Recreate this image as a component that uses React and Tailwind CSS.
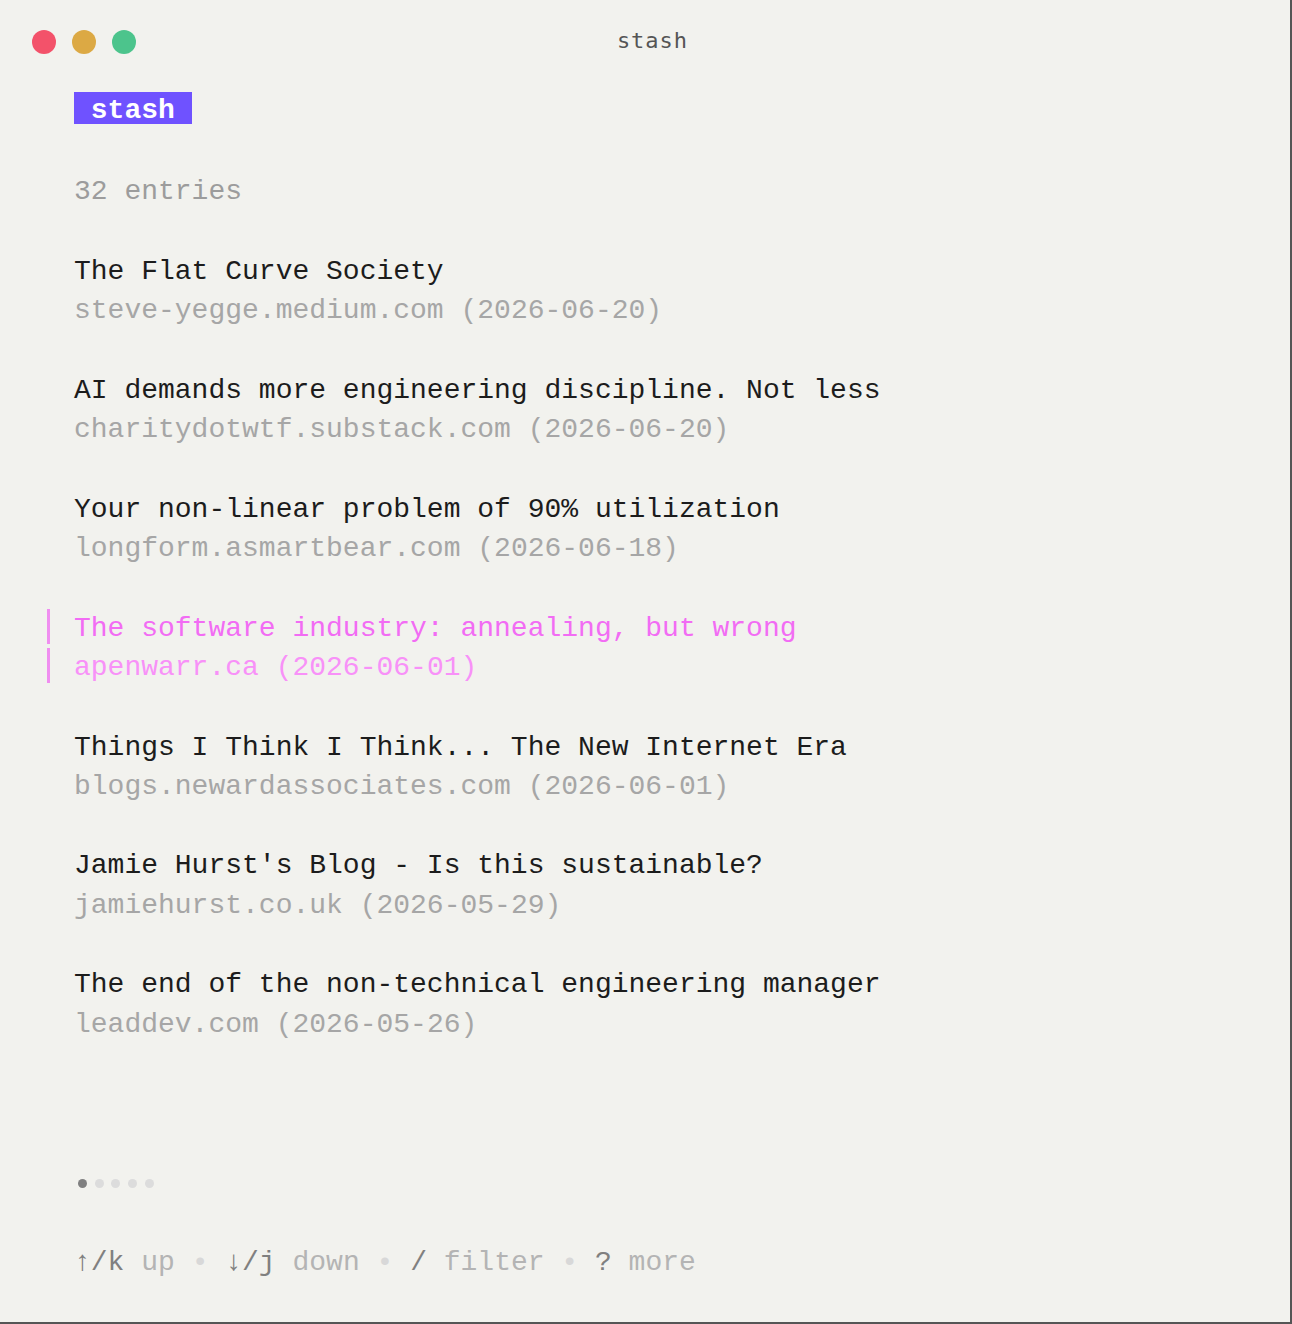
import React from "react";

const ENTRIES = [
  { title: "The Flat Curve Society", host: "steve-yegge.medium.com", date: "2026-06-20" },
  { title: "AI demands more engineering discipline. Not less", host: "charitydotwtf.substack.com", date: "2026-06-20" },
  { title: "Your non-linear problem of 90% utilization", host: "longform.asmartbear.com", date: "2026-06-18" },
  { title: "The software industry: annealing, but wrong", host: "apenwarr.ca", date: "2026-06-01", selected: true },
  { title: "Things I Think I Think... The New Internet Era", host: "blogs.newardassociates.com", date: "2026-06-01" },
  { title: "Jamie Hurst's Blog - Is this sustainable?", host: "jamiehurst.co.uk", date: "2026-05-29" },
  { title: "The end of the non-technical engineering manager", host: "leaddev.com", date: "2026-05-26" },
];

const HELP = [
  ["↑/k", "up"],
  ["↓/j", "down"],
  ["/", "filter"],
  ["?", "more"],
];

function Row({ children, className = "" }) {
  return (
    <div className={`h-[39.67px] leading-[39.67px] whitespace-pre ${className}`}>
      {children}
    </div>
  );
}

function SelRow({ children, className = "" }) {
  return (
    <div
      className={`-ml-[27px] mb-[4.67px] h-[35px] border-l-[3px] border-[#f08ef0] pl-[24px] leading-[39.67px] whitespace-pre ${className}`}
    >
      {children}
    </div>
  );
}

function Entry({ entry }) {
  if (entry.selected) {
    return (
      <div className="flex flex-col">
        <SelRow className="text-[#f26cf4]">{entry.title}</SelRow>
        <SelRow className="text-[#f891f8]">
          {entry.host} ({entry.date})
        </SelRow>
      </div>
    );
  }
  return (
    <div className="flex flex-col">
      <Row className="text-[#1c1c1c]">{entry.title}</Row>
      <Row className="text-[#a6a6a6]">
        {entry.host} ({entry.date})
      </Row>
    </div>
  );
}

export default function App() {
  return (
    <div className="h-[1324px] w-[1292px] overflow-hidden border-r-2 border-b-2 border-[#555555] bg-[#f2f2ee]">
      {/* title bar */}
      <div className="flex h-[84px] items-center pl-[32px]">
        <div className="flex w-[104px] gap-4">
          <span className="h-6 w-6 rounded-full bg-[#f3526a]" />
          <span className="h-6 w-6 rounded-full bg-[#dca944]" />
          <span className="h-6 w-6 rounded-full bg-[#4cc48c]" />
        </div>
        <div className="-mt-1 flex-1 text-center font-['DejaVu_Sans_Mono',monospace] text-[22px] tracking-[1px] text-[#555555]">
          stash
        </div>
        <div className="w-[121px]" />
      </div>

      {/* terminal body */}
      <div className="pt-[9px] pl-[74px] font-['Liberation_Mono','DejaVu_Sans_Mono',monospace] text-[28px]">
        <Row>
          <span className="-mt-[1.5px] inline-block h-8 bg-[#6f52ff] pt-[6px] align-top leading-[26px] font-bold text-white">
            {" stash "}
          </span>
        </Row>
        <Row />
        <Row className="text-[#9c9c9c]">32 entries</Row>
        <Row />

        <div className="flex flex-col gap-[39.67px]">
          {ENTRIES.map((e) => (
            <Entry key={e.title} entry={e} />
          ))}
        </div>

        <Row />
        <Row />
        <Row />

        <Row className="flex items-center">
          {[0, 1, 2, 3, 4].map((i) => (
            <span key={i} className="flex w-[16.8px] justify-center">
              <span
                className={`h-[9px] w-[9px] rounded-full ${i === 0 ? "bg-[#808080]" : "bg-[#dcdcdc]"}`}
              />
            </span>
          ))}
        </Row>
        <Row />
        <Row>
          {HELP.map(([k, d], i) => (
            <React.Fragment key={k}>
              {i > 0 && <span className="text-[#d8d8d8]">{" • "}</span>}
              <span className="text-[#808080]">{k}</span>
              <span className="text-[#b4b4b4]">{" " + d}</span>
            </React.Fragment>
          ))}
        </Row>
      </div>
    </div>
  );
}
